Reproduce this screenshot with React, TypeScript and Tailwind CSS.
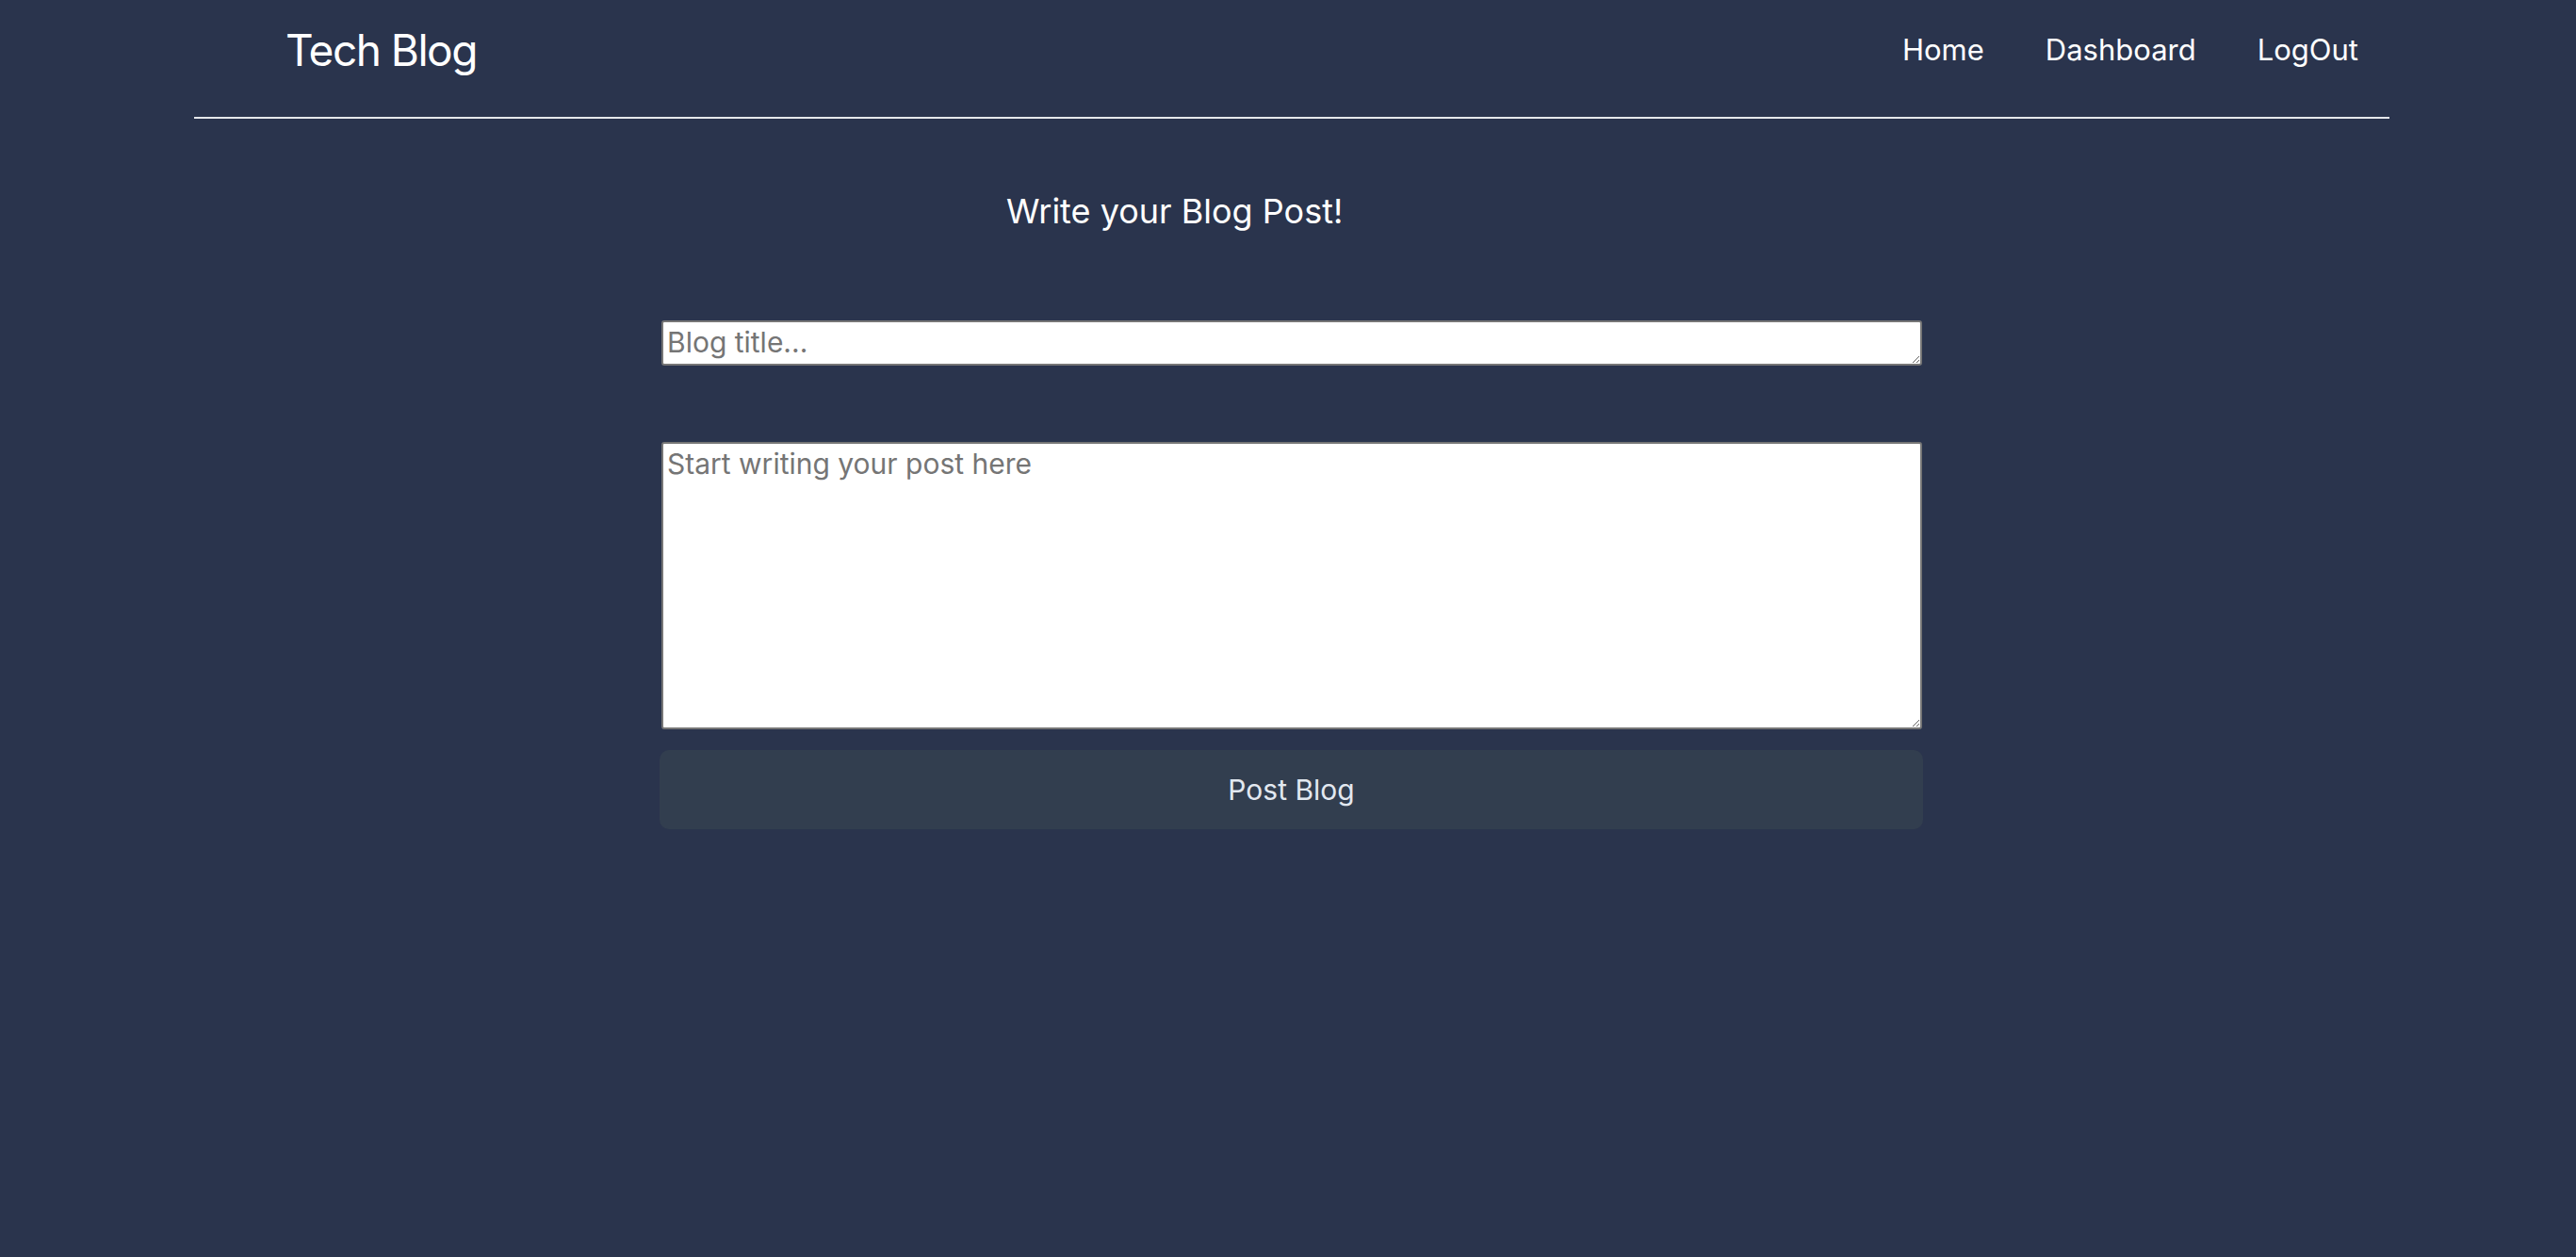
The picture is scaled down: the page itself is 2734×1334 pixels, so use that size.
import React from "react";

export default function App() {
  return (
    <div
      className="min-h-screen w-full bg-[#2a344d] text-white"
      style={{ fontFamily: "Inter, 'Noto Sans', sans-serif" }}
    >
      <header className="ml-[206px] mr-[198px] h-[126px] border-b-2 border-[#e5e7eb] flex items-start justify-between pl-[97px] pr-[33px] pt-[29px]">
        <h1 className="text-[46px] leading-[48px] font-normal tracking-[-1.5px]">Tech Blog</h1>
        <nav className="flex gap-[65px] mt-[9px] text-[31px] leading-[30px]">
          <a href="#">Home</a>
          <a href="#">Dashboard</a>
          <a href="#">LogOut</a>
        </nav>
      </header>
      <main className="ml-[700px] w-[1341px] flex flex-col">
        <h2 className="mt-[80px] pl-[368px] text-[36px] leading-[36px] font-normal">
          Write your Blog Post!
        </h2>
        <textarea
          className="mt-[98px] ml-[2px] w-[1338px] h-[48px] bg-white border-2 border-[#767676] rounded-[3px] px-[4px] py-[3px] text-[30px] leading-[36px] text-black placeholder:text-[#757575] outline-none"
          placeholder="Blog title..."
        />
        <textarea
          className="mt-[81px] ml-[2px] w-[1338px] h-[305px] bg-white border-2 border-[#767676] rounded-[3px] px-[4px] py-[3px] text-[30px] leading-[36px] text-black placeholder:text-[#757575] outline-none"
          placeholder="Start writing your post here"
        />
        <button className="mt-[22px] w-[1341px] h-[84px] rounded-[10px] bg-[#323e4f] text-[30px] leading-[36px] text-[#e2e8f0]">
          Post Blog
        </button>
      </main>
    </div>
  );
}
